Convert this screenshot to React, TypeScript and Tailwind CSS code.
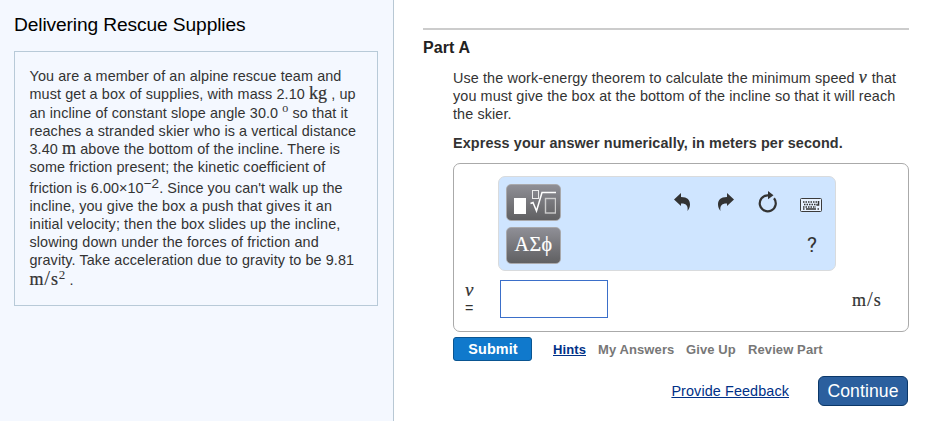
import type { ReactNode } from "react";

const Line = ({ children, className = "h-[18px]" }: { children: ReactNode; className?: string }) => (
  <span className={`flex items-end whitespace-pre leading-[18px] ${className}`}>
    <span className="block h-[18px]">{children}</span>
  </span>
);

const Tex = ({ children, className = "text-[17px]" }: { children: ReactNode; className?: string }) => (
  <span className={`font-['Liberation_Serif',serif] leading-[0] ${className}`}>{children}</span>
);

const Speed = () => (
  <>m<span className="text-[21px] tracking-[1px] [-webkit-text-stroke:0px]">/</span>s</>
);

function Problem() {
  return (
    <section className="h-[421px] w-[394px] shrink-0 border-r border-[#b8c8d4] bg-[#f4f8ff] pl-[14px] pt-[13px]">
      <h1 className="h-[38px] whitespace-nowrap text-[19.2px] leading-[24px] tracking-[-0.12px] text-black">Delivering Rescue Supplies</h1>
      <div className="h-[255px] w-[364px] border border-[#b8cad8] pl-[14.500px] pt-[15px]">
        <p className="text-[14.4px] tracking-[0.1px] text-[#333]">
          <Line>You are a member of an alpine rescue team and</Line>
          <Line>must get a box of supplies, with mass 2.10 <Tex className="text-[18px] [-webkit-text-stroke:0.2px_#333]">kg</Tex> , up</Line>
          <Line className="h-[19px]">an incline of constant slope angle 30.0 <Tex className="relative -top-[6px] text-[12px]">o</Tex> so that it</Line>
          <Line>reaches a stranded skier who is a vertical distance</Line>
          <Line>3.40 <Tex className="text-[18px] [-webkit-text-stroke:0.2px_#333]">m</Tex> above the bottom of the incline. There is</Line>
          <Line>some friction present; the kinetic coefficient of</Line>
          <Line className="h-[21px] tracking-[0.05px]">friction is 6.00×10<span className="relative -top-[5px] text-[13.500px] leading-[0]">−2</span>. Since you can't walk up the</Line>
          <Line>incline, you give the box a push that gives it an</Line>
          <Line>initial velocity; then the box slides up the incline,</Line>
          <Line>slowing down under the forces of friction and</Line>
          <Line>gravity. Take acceleration due to gravity to be 9.81</Line>
          <Line className="h-[20px]"><Tex className="text-[18px] tracking-[0.700px] [-webkit-text-stroke:0.2px_#333]"><Speed /></Tex><Tex className="relative -top-[6px] text-[13px]">2</Tex> .</Line>
        </p>
      </div>
    </section>
  );
}

const toolButton =
  "flex h-[37px] w-[55px] items-center justify-center rounded-[5px] border border-[#a9a9ac] bg-linear-to-b from-[#8f8f96] to-[#606062]";

function Toolbar() {
  return (
    <div className="flex h-[95px] w-[338px] rounded-[7px] border border-[#d9dbdd] bg-[#cfe5ff] pl-[7px] pt-[7px]">
      <div className="flex w-[55px] flex-col gap-[6px]">
        <button className={toolButton}>
          <svg width="44" height="26" viewBox="0 0 44 26" fill="none" className="mb-[2px] shrink-0">
            <rect x="2" y="9" width="12" height="16" fill="#fff" />
            <rect x="20.500" y="1.500" width="6" height="8" stroke="#ececec" />
            <path d="M18.500 14.500l2.500-1L24.500 22l5.500-18.500h14.500" stroke="#fff" strokeWidth="1.500" />
            <rect x="33.500" y="9.500" width="10" height="14.500" stroke="#ccc" strokeWidth="1.400" />
          </svg>
        </button>
        <button className={`${toolButton} text-white`}>
          <span className="mb-[3px] font-['Liberation_Serif',serif] text-[20px] leading-none tracking-[0.5px] [-webkit-text-stroke:0.2px_#fff]">ΑΣϕ</span>
        </button>
      </div>
      <div className="ml-[113px] flex h-[79px] w-[149px] flex-col justify-between">
        <div className="flex h-[38px] items-center pb-[2px]">
          <svg width="16" height="18" viewBox="0 0 16 18" fill="#333">
            <path d="M0 6.500L7 0v4c6.500.1 9 3 9 7.500 0 2.500-1 4.500-2.500 6.500.8-5-1-7.600-6.500-7.500V13z" />
          </svg>
          <svg width="16" height="18" viewBox="0 0 16 18" fill="#333" className="ml-[28px]">
            <path d="M16 6.500L9 0v4C2.500 4.100 0 7 0 11.500 0 14 1 16 2.500 18 1.700 13 3.500 10.400 9 10.500V13z" />
          </svg>
          <svg width="20" height="22" viewBox="0 0 20 22" fill="none" className="ml-[24px]">
            <path d="M11.500 4.300H9.500A8 8 0 1 0 16 7.300" stroke="#333" strokeWidth="2.200" />
            <path d="M10 0l5.500 4.200L10 8.200z" fill="#333" />
          </svg>
          <svg width="22" height="14" viewBox="0 0 22 14" fill="none" className="ml-[22px] mt-[5px]">
            <rect x="0.500" y="0.500" width="21" height="13" rx="1" stroke="#3b3b3b" fill="#e8f2ff" />
            <path d="M3 4h16M4 6.500h13M3 9h13" stroke="#333" strokeWidth="1.500" strokeDasharray="1.500 1" />
            <path d="M18.500 3v4h-2M6 11h10M3 11h1.500M17.500 11H19" stroke="#333" strokeWidth="1.500" />
          </svg>
        </div>
        <div className="flex h-[30px] justify-end pr-[6px] font-['Roboto',sans-serif] text-[21px] leading-[24px] text-[#333]">?</div>
      </div>
    </div>
  );
}

function AnswerBox() {
  return (
    <div className="h-[169px] w-[456px] rounded-[7px] border border-[#aaa] pl-[11px] pt-[12px] tracking-normal text-[#333]">
      <div className="ml-[33px]"><Toolbar /></div>
      <div className="mt-[9px] flex h-[38px] items-center">
        <div className="flex w-[35px] flex-col text-[14.4px] leading-[18px]">
          <Tex className="text-[19px] italic leading-[18px] [-webkit-text-stroke:0.2px_#333]">v</Tex>
          <span>=</span>
        </div>
        <input aria-label="v" className="h-[38px] w-[108px] border border-[#3b6fc9] bg-white outline-none" />
        <Tex className="ml-[244px] text-[18px] leading-[20px] tracking-[1px] [-webkit-text-stroke:0.2px_#333]"><Speed /></Tex>
      </div>
    </div>
  );
}

function Part() {
  return (
    <section className="flex-1 pl-[29px] pt-[28px]">
      <div className="h-[2px] w-[486px] bg-[#ccc]" />
      <h2 className="mt-[8px] text-[16px] font-bold leading-[20px] tracking-[0.1px] text-[#222]">Part A</h2>
      <div className="ml-[30px] mt-[11px] text-[14.4px] tracking-[0.1px] text-[#333]">
        <p>
          <Line>Use the work-energy theorem to calculate the minimum speed <Tex className="text-[18px] italic tracking-[0.800px] [-webkit-text-stroke:0.2px_#333]">v</Tex> that</Line>
          <Line>you must give the box at the bottom of the incline so that it will reach</Line>
          <Line>the skier.</Line>
        </p>
        <p className="mt-[11px] whitespace-nowrap font-bold leading-[18px]">Express your answer numerically, in meters per second.</p>
        <div className="mt-[11px]"><AnswerBox /></div>
        <div className="mt-[5px] flex h-[24px] items-center whitespace-nowrap text-[13px] font-bold text-[#777]">
          <button className="h-[24px] w-[79px] rounded-[3px] border border-[#0a5591] bg-[#1079cc] pl-[1px] text-[14.4px] leading-[22px] text-white">Submit</button>
          <div className="ml-[21px] mt-[2px] flex">
            <a className="w-[45px] text-[#003087] underline underline-offset-1">Hints</a>
            <span className="w-[88px]">My Answers</span>
            <span className="w-[62px]">Give Up</span>
            <span>Review Part</span>
          </div>
        </div>
        <div className="mt-[15px] flex h-[30px] w-[455px] items-center justify-end gap-[29px]">
          <a className="mt-[2px] text-[14.4px] text-[#003087] underline underline-offset-1">Provide Feedback</a>
          <button className="h-[30px] w-[90px] rounded-[6px] border border-[#0b3768] bg-[#2b5f9e] text-[17.600px] leading-[28px] text-white">Continue</button>
        </div>
      </div>
    </section>
  );
}

export default function App() {
  return (
    <main className="flex h-[421px] w-[931px] overflow-hidden bg-white font-['Liberation_Sans',Arial,sans-serif]">
      <Problem />
      <Part />
    </main>
  );
}
